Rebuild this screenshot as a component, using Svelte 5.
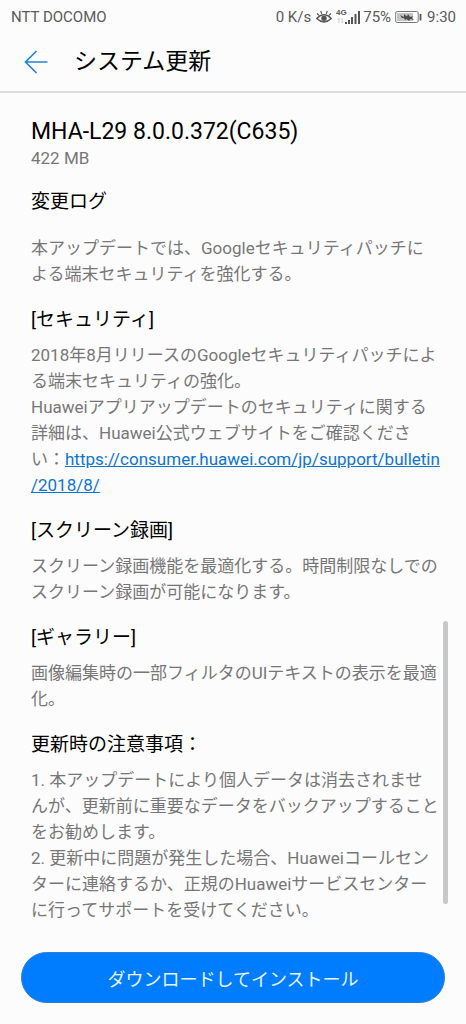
<script>
    const version = "MHA-L29 8.0.0.372(C635)";
    const size = "422 MB";

    const sections = [
        {
            title: "[セキュリティ]",
            lines: [
                "2018年8月リリースのGoogleセキュリティパッチによ",
                "る端末セキュリティの強化。",
                "Huaweiアプリアップデートのセキュリティに関する",
                "詳細は、Huawei公式ウェブサイトをご確認くださ",
                "い：",
            ],
            link: ["https://consumer.huawei.com/jp/support/bulletin", "/2018/8/"],
        },
        {
            title: "[スクリーン録画]",
            lines: ["スクリーン録画機能を最適化する。時間制限なしでの", "スクリーン録画が可能になります。"],
        },
        {
            title: "[ギャラリー]",
            lines: ["画像編集時の一部フィルタのUIテキストの表示を最適", "化。"],
        },
        {
            title: "更新時の注意事項：",
            lines: [
                "1. 本アップデートにより個人データは消去されませ",
                "んが、更新前に重要なデータをバックアップすること",
                "をお勧めします。",
                "2. 更新中に問題が発生した場合、Huaweiコールセン",
                "ターに連絡するか、正規のHuaweiサービスセンター",
                "に行ってサポートを受けてください。",
            ],
        },
    ];
</script>

<div class="screen">
    <div class="status">
        <span class="carrier">NTT DOCOMO</span>
        <span>0 K/s</span>
        <svg class="eye" width="16" height="16" viewBox="0 0 16 16" fill="none" stroke="#555">
            <path d="M.8 9.500Q8 1.800 15.200 9.500Q8 16.500 .8 9.500Z" stroke-width="1.400"/>
            <circle cx="8" cy="9.200" r="2.700" fill="#555" stroke="none"/>
            <path d="M1 4.500l2.400 2.200M4.600 2l1.200 2.800M11.400 2l-1.200 2.800M15 4.500l-2.400 2.200" stroke-width="1.100"/>
        </svg>
        <svg class="signal" width="25" height="18" viewBox="0 0 25 18">
            <text x="0" y="7" font-size="8" font-weight="700" fill="#555" font-family="Liberation Sans, sans-serif">4G</text>
            <path d="M3 15v-5M1.500 11.500l1.500-1.500M6 10v5M7.500 13.500l-1.500 1.500" stroke="#ccc" fill="none"/>
            <path d="M9 14h2v2h-2zM12 12h2v4h-2zM15 9h2v7h-2zM18.500 6h2v10h-2zM22 3h2v13h-2z" fill="#555"/>
        </svg>
        <span>75%</span>
        <svg class="battery" width="27" height="14" viewBox="0 0 27 14">
            <rect x=".7" y="1.500" width="22.500" height="11" rx="1.500" fill="#fff" stroke="#777"/>
            <rect x="2" y="3" width="16" height="8" fill="#c4c4c4"/>
            <path d="M5 5l4 2 0-3 3 2.500 1-2.500 2 3 3-1-1 2 2 2-4-1-1 2-2.500-2-1.500 1-1-2-2 0z" fill="#4a4a4a"/>
            <path d="M25.500 4v6.500" stroke="#555" stroke-width="1.800"/>
        </svg>
        <span>9:30</span>
    </div>

    <header>
        <button class="back" aria-label="戻る">
            <svg width="24" height="24" viewBox="0 0 24 24" fill="none" stroke="#2583dc" stroke-width="1.700">
                <path d="M23.500 12H1.500M12.500 1L1.500 12l11 11"/>
            </svg>
        </button>
        <h1>システム更新</h1>
    </header>

    <main>
        <div class="log">
            <h2 class="version">{version}</h2>
            <p class="size">{size}</p>
            <h3 class="changes">変更ログ</h3>
            <p>本アップデートでは、Googleセキュリティパッチに<br>よる端末セキュリティを強化する。</p>

            {#each sections as section}
                <h3>{section.title}</h3>
                <p>
                    {#each section.lines as line, i}{#if i > 0}<br>{/if}{line}{/each}{#if section.link}<a href={section.link.join("")}>{section.link[0]}<br>{section.link[1]}</a>{/if}
                </p>
            {/each}
        </div>
        <div class="track"><div class="thumb"></div></div>
    </main>

    <footer>
        <button class="install">ダウンロードしてインストール</button>
    </footer>
</div>

<style>
    :global(body) {
        background: #fcfcfc;
    }

    .screen {
        min-height: 100vh;
        display: flex;
        flex-direction: column;
        background: #fcfcfc;
        color: #000;
        font-family: Roboto, "Noto Sans CJK JP", sans-serif;
    }

    .status {
        display: flex;
        align-items: center;
        height: 33px;
        padding: 0 10px 0 11px;
        font-size: 15px;
        color: #5a5a5a;
        white-space: nowrap;
    }

    .carrier {
        margin-right: auto;
    }

    .eye {
        margin: 0 4px 0 5px;
    }

    .signal {
        margin-right: 2px;
    }

    .battery {
        margin: 0 5px 0 4px;
    }

    header {
        display: flex;
        align-items: center;
        gap: 26px;
        height: 58px;
        padding: 0 24px;
        border-bottom: 2px solid #dcdcdc;
    }

    button {
        border: 0;
        font-family: inherit;
        cursor: pointer;
    }

    .back {
        display: flex;
        padding: 0;
        background: none;
    }

    h1, h2, h3, p {
        margin: 0;
        font-weight: 400;
    }

    h1 {
        font-size: 23px;
        line-height: 32px;
    }

    main {
        flex: 1;
        display: flex;
        padding: 26px 18px 0 31px;
    }

    .log {
        flex: 1;
        min-width: 0;
    }

    .version {
        font-size: 23px;
        line-height: 26px;
    }

    h3 {
        margin: 20px 0 9px;
        font-size: 19px;
        line-height: 26px;
    }

    .changes {
        margin: 18px 0 20px;
    }

    p {
        font-size: 17px;
        line-height: 26px;
        color: #777;
    }

    a {
        color: #0f74d1;
    }

    .track {
        display: flex;
        flex-direction: column;
        justify-content: flex-end;
        width: 5px;
        padding-bottom: 20px;
    }

    .thumb {
        height: 36%;
        border-radius: 3px;
        background: #c8c8c8;
    }

    footer {
        padding: 28px 21px 21px;
    }

    .install {
        width: 100%;
        height: 51px;
        border: 1px solid #2b7fd8;
        border-radius: 26px;
        background: #007dff;
        color: #e8f6ff;
        font-size: 18px;
    }
</style>
